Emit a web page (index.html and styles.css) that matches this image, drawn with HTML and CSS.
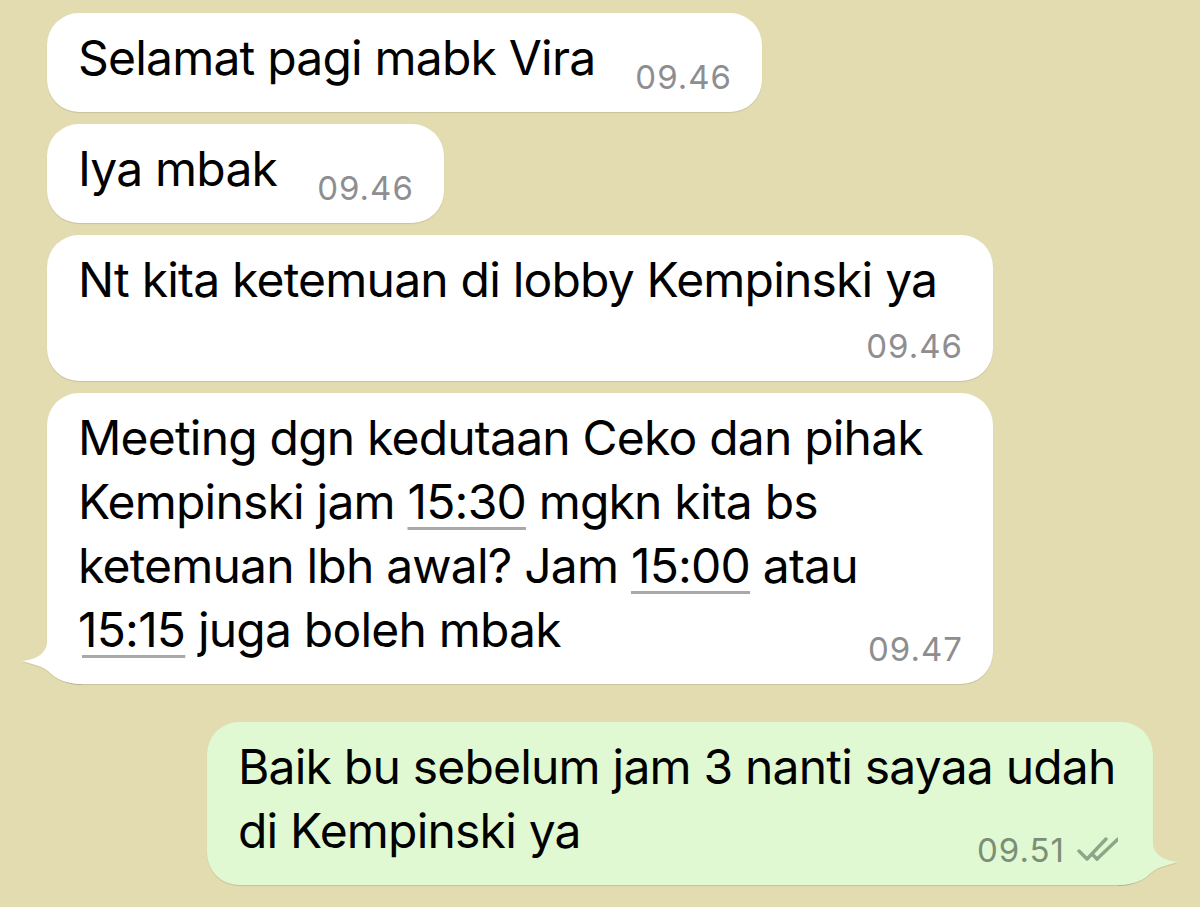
FILE: index.html
```html
<!DOCTYPE html>
<html lang="id">
<head>
  <meta charset="UTF-8" />
  <meta name="viewport" content="width=device-width, initial-scale=1" />
  <title>Chat</title>
  <link rel="stylesheet" href="styles.css">
</head>
<body>
  <div class="chat">
    <div class="row in">
      <div class="bubble">
        Selamat pagi mabk Vira<span class="time">09.46</span>
      </div>
    </div>
    <div class="row in">
      <div class="bubble">
        Iya mbak<span class="time">09.46</span>
      </div>
    </div>
    <div class="row in">
      <div class="bubble time-below">
        Nt kita ketemuan di lobby Kempinski ya<span class="time">09.46</span>
      </div>
    </div>
    <div class="row in">
      <div class="bubble">
        Meeting dgn kedutaan Ceko dan pihak Kempinski jam <span class="link">15:30</span> mgkn kita bs ketemuan lbh awal? Jam <span class="link">15:00</span> atau <span class="link">15:15</span> juga boleh mbak<span class="time">09.47</span>
        <svg class="tail" width="60" height="50" viewBox="0 0 60 50">
          <path d="M25 0 L25 8 C25 19 14 26 0 27 C9 30 18 31 26 37 C34 45 44 50 60 50 L60 0 Z" />
        </svg>
      </div>
    </div>
    <div class="row out">
      <div class="bubble">
        Baik bu sebelum jam 3 nanti sayaa udah di Kempinski ya<span class="time">09.51 <svg class="ticks" width="46" height="26" viewBox="0 0 46 26"><path d="M2 14 L10 22 L29 2" /><path d="M20 22 L41 2" /><path d="M16 18 L20 22" /></svg></span>
        <svg class="tail" width="60" height="50" viewBox="0 0 60 50">
          <path d="M35 0 L35 8 C35 19 46 26 60 27 C51 30 42 31 34 37 C26 45 16 50 0 50 L0 0 Z" />
        </svg>
      </div>
    </div>
  </div>
</body>
</html>
```

FILE: styles.css
```css
* { margin: 0; padding: 0; box-sizing: border-box; }
body {
  font-family: 'Inter', 'Liberation Sans', sans-serif;
  background: #e3dcb0;
  color: #000;
  height: 907px;
  overflow: hidden;
}
.chat {
  display: flex;
  flex-direction: column;
  gap: 12px;
  padding: 13px 47px 0;
}
.row { display: flex; }
.row.out {
  justify-content: flex-end;
  margin-top: 26px;
}
.bubble {
  position: relative;
  display: flow-root;
  max-width: 946px;
  padding: 13px 30px 19px 31px;
  border-radius: 32px;
  font-size: 48px;
  line-height: 64px;
  letter-spacing: -0.8px;
  background: #fff;
  box-shadow: 0 1px 1px rgba(0,0,0,0.12);
}
.out .bubble {
  background: #e0f9d2;
  padding-right: 30px;
}
/* Time stamp sits on the last line, pushed to the right */
.time {
  float: right;
  margin: 35px 0 0 40px;
  font-size: 33px;
  line-height: 32px;
  letter-spacing: 1px;
  color: #8e8e90;
  display: flex;
  align-items: center;
  gap: 12px;
}
.out .time { color: #7b8f77; }
.time-below .time { margin-top: 18px; }
.link {
  text-decoration: underline;
  text-decoration-color: #a9a9a9;
  text-decoration-thickness: 3px;
  text-underline-offset: 8px;
}
.ticks {
  fill: none;
  stroke: #8ca787;
  stroke-width: 3.4;
  stroke-linecap: round;
  stroke-linejoin: round;
}
/* Bubble tails */
.tail {
  position: absolute;
  bottom: 0;
  filter: drop-shadow(0 1px 0.5px rgba(0,0,0,0.1));
}
.in .tail { left: -25px; fill: #fff; }
.out .tail { right: -25px; fill: #e0f9d2; }
```
